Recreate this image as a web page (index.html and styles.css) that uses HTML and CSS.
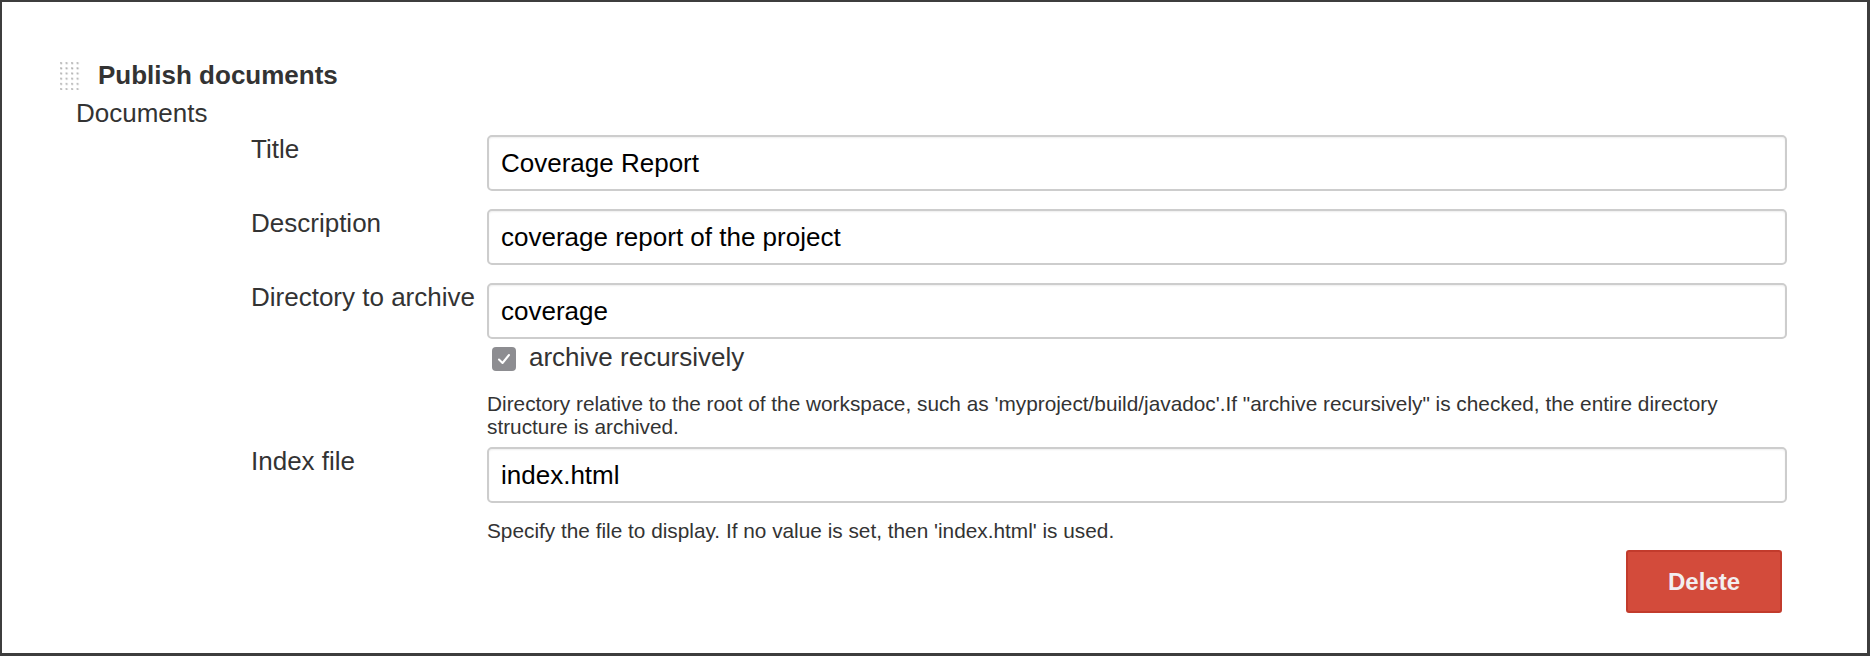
FILE: index.html
```html
<!DOCTYPE html>
<html lang="en">
<head>
<meta charset="utf-8">
<title>Publish documents</title>
<link rel="stylesheet" href="styles.css">
</head>
<body>
<div class="frame">
  <div class="section">
    <div class="section-head">
      <svg class="grip" width="22" height="28" viewBox="0 0 22 28" aria-hidden="true">
        <defs>
          <pattern id="dots" x="0" y="0" width="5.5" height="5.2" patternUnits="userSpaceOnUse">
            <rect x="0" y="0" width="2" height="2" fill="#c4c4c4"/>
            <rect x="1" y="1" width="1" height="1" fill="#a6a6a6"/>
          </pattern>
        </defs>
        <rect x="0" y="0" width="22" height="28" fill="url(#dots)"/>
      </svg>
      <span class="section-title">Publish documents</span>
    </div>
    <div class="group-label">Documents</div>
    <div class="fields">
      <div class="field">
        <div class="field-label">Title</div>
        <div class="field-control">
          <input class="text-input" type="text" value="Coverage Report">
        </div>
      </div>
      <div class="field">
        <div class="field-label">Description</div>
        <div class="field-control">
          <input class="text-input" type="text" value="coverage report of the project">
        </div>
      </div>
      <div class="field field--help">
        <div class="field-label">Directory to archive</div>
        <div class="field-control">
          <input class="text-input" type="text" value="coverage">
          <div class="check-row">
            <span class="check">
              <svg width="24" height="24" viewBox="0 0 24 24" aria-hidden="true">
                <path d="M7 12.5 L10.5 16 L17 8" fill="none" stroke="#fff" stroke-width="2" stroke-linecap="round" stroke-linejoin="round"/>
              </svg>
            </span>
            <span class="check-label">archive recursively</span>
          </div>
          <div class="help">Directory relative to the root of the workspace, such as 'myproject/build/javadoc'.If "archive recursively" is checked, the entire directory structure is archived.</div>
        </div>
      </div>
      <div class="field field--last">
        <div class="field-label">Index file</div>
        <div class="field-control">
          <input class="text-input" type="text" value="index.html">
          <div class="help">Specify the file to display. If no value is set, then 'index.html' is used.</div>
        </div>
      </div>
      <div class="actions">
        <button class="btn-delete" type="button">Delete</button>
      </div>
    </div>
  </div>
</div>
</body>
</html>
```

FILE: styles.css
```css
* { box-sizing: border-box; }

html, body {
  margin: 0;
  padding: 0;
  background: #fff;
}

body {
  font-family: "Liberation Sans", Arial, Helvetica, sans-serif;
  color: #333;
}

.frame {
  width: 1870px;
  height: 656px;
  border-style: solid;
  border-color: #3d3d3d;
  border-width: 2px 3px 3px 2px;
  overflow: hidden;
}

.section {
  padding: 58px 0 0 58px;
}

.section-head {
  display: flex;
  align-items: flex-start;
  height: 30px;
}

.grip {
  display: block;
  margin-top: 2px;
  flex: none;
}

.section-title {
  margin-left: 16px;
  font-size: 26px;
  line-height: 30px;
  font-weight: bold;
  color: #333;
}

.group-label {
  margin: 8px 0 0 16px;
  font-size: 26px;
  line-height: 30px;
  color: #333;
}

.fields {
  margin: 7px 0 0 191px;
  width: 1536px;
}

.field {
  display: grid;
  grid-template-columns: 236px 1300px;
  padding-bottom: 18px;
}

.field--help {
  padding-bottom: 9px;
}

.field--last {
  padding-bottom: 8px;
}

.field-label {
  margin-top: -1px;
  font-size: 26px;
  line-height: 30px;
  color: #333;
  white-space: nowrap;
}

.field-control {
  display: flex;
  flex-direction: column;
}

.text-input {
  display: block;
  width: 100%;
  height: 56px;
  margin: 0;
  padding: 0 12px;
  border: 2px solid #cdcdcd;
  border-radius: 5px;
  box-shadow: inset 0 1px 2px rgba(0, 0, 0, 0.07);
  background: #fff;
  font-family: "Liberation Sans", Arial, Helvetica, sans-serif;
  font-size: 26px;
  color: #000;
  outline: none;
}

.check-row {
  display: flex;
  align-items: center;
  height: 30px;
  margin: 3px 0 4px 5px;
}

.check {
  display: block;
  width: 24px;
  height: 24px;
  margin-top: 3px;
  border-radius: 4px;
  background: #8d8d91;
  flex: none;
}

.check svg {
  display: block;
}

.check-label {
  margin-left: 13px;
  font-size: 26px;
  line-height: 30px;
  color: #333;
}

.help {
  margin-top: 16px;
  font-size: 20.8px;
  line-height: 23px;
  color: #333;
}

.actions {
  display: flex;
  justify-content: flex-end;
  padding-right: 5px;
}

.btn-delete {
  width: 156px;
  height: 63px;
  margin: 0;
  padding: 0;
  border: 2px solid #c23b2c;
  border-radius: 3px;
  background: #d34b3b;
  font-family: "Liberation Sans", Arial, Helvetica, sans-serif;
  font-size: 24px;
  font-weight: bold;
  color: #f2eef0;
  cursor: pointer;
}
```
